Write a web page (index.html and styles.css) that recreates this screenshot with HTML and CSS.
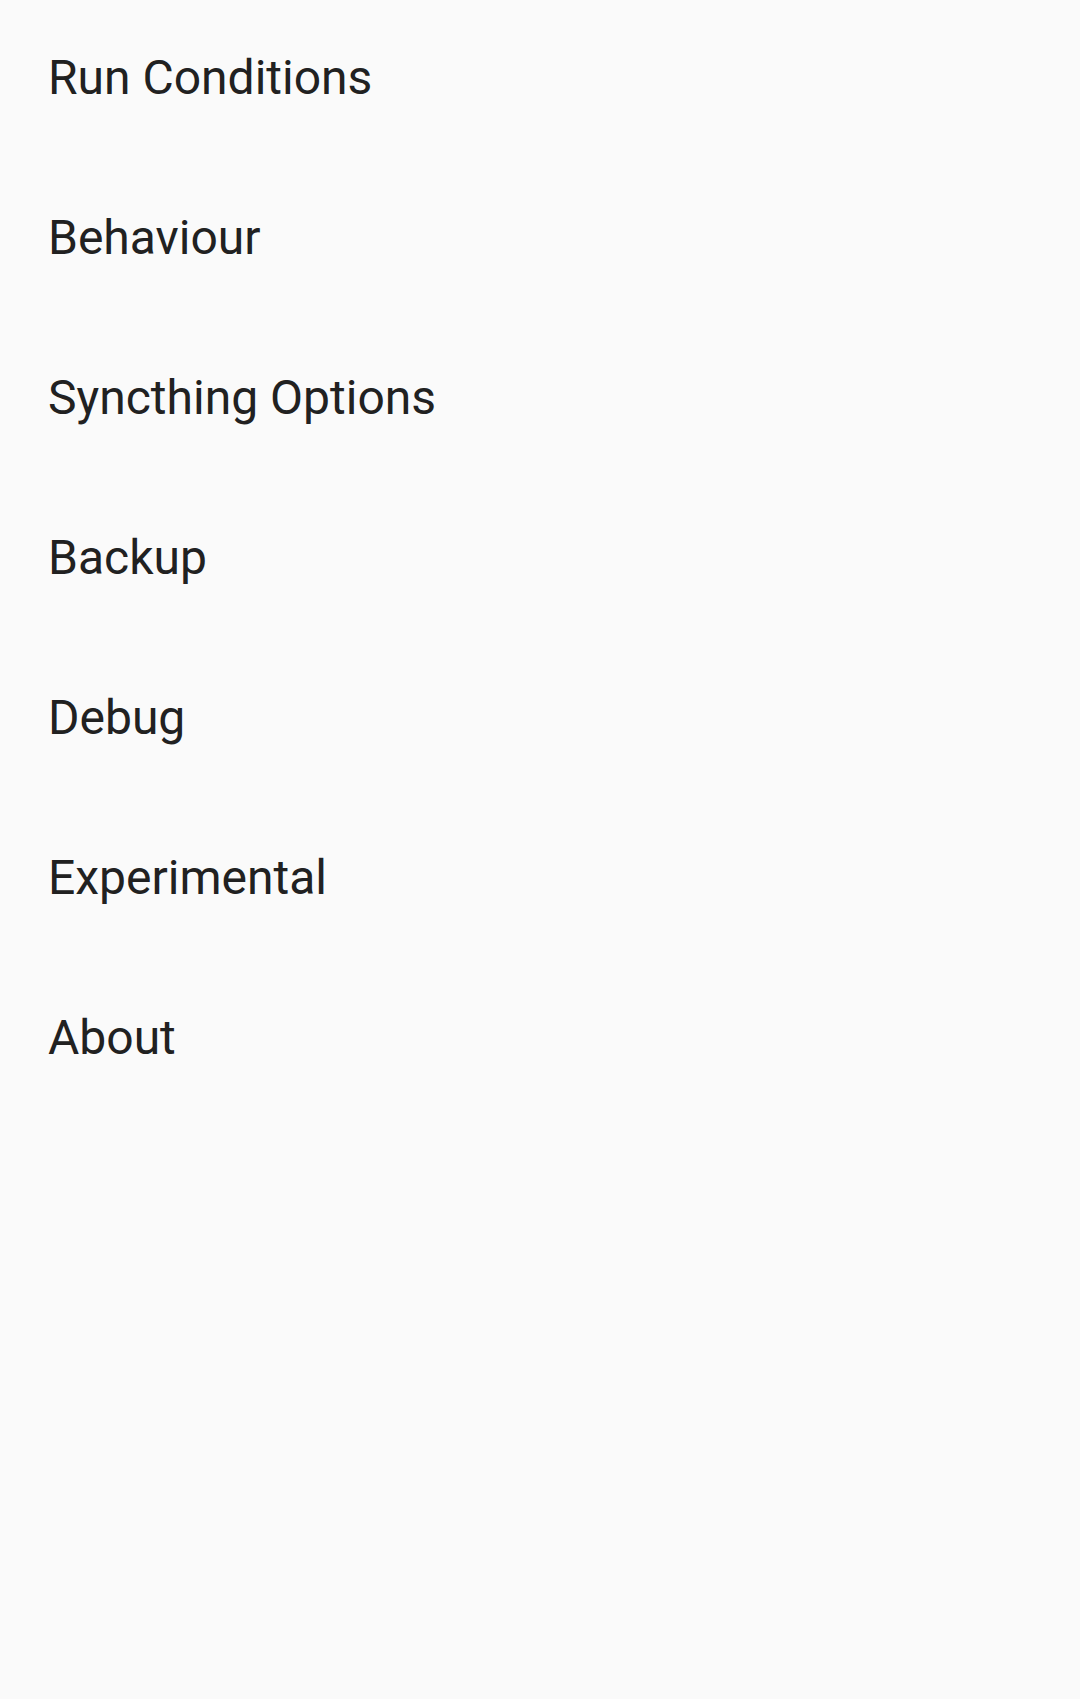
FILE: index.html
```html
<!DOCTYPE html>
<html>
<head>
<meta charset="utf-8">
<link rel="stylesheet" href="styles.css">
</head>
<body>
<ul class="menu">
  <li class="item">Run Conditions</li>
  <li class="item">Behaviour</li>
  <li class="item">Syncthing Options</li>
  <li class="item">Backup</li>
  <li class="item">Debug</li>
  <li class="item">Experimental</li>
  <li class="item">About</li>
</ul>
</body>
</html>
```
FILE: styles.css
```css
html, body {
  margin: 0;
  padding: 0;
  background: #fafafa;
  width: 1080px;
  height: 1699px;
  overflow: hidden;
}
.menu {
  list-style: none;
  margin: 0;
  padding: 0;
  font-family: Roboto, "Liberation Sans", sans-serif;
}
.item {
  height: 160px;
  display: flex;
  align-items: center;
  padding: 0 48px 5px 48px;
  box-sizing: border-box;
  font-size: 48px;
  line-height: 56px;
  color: #212121;
}
```
